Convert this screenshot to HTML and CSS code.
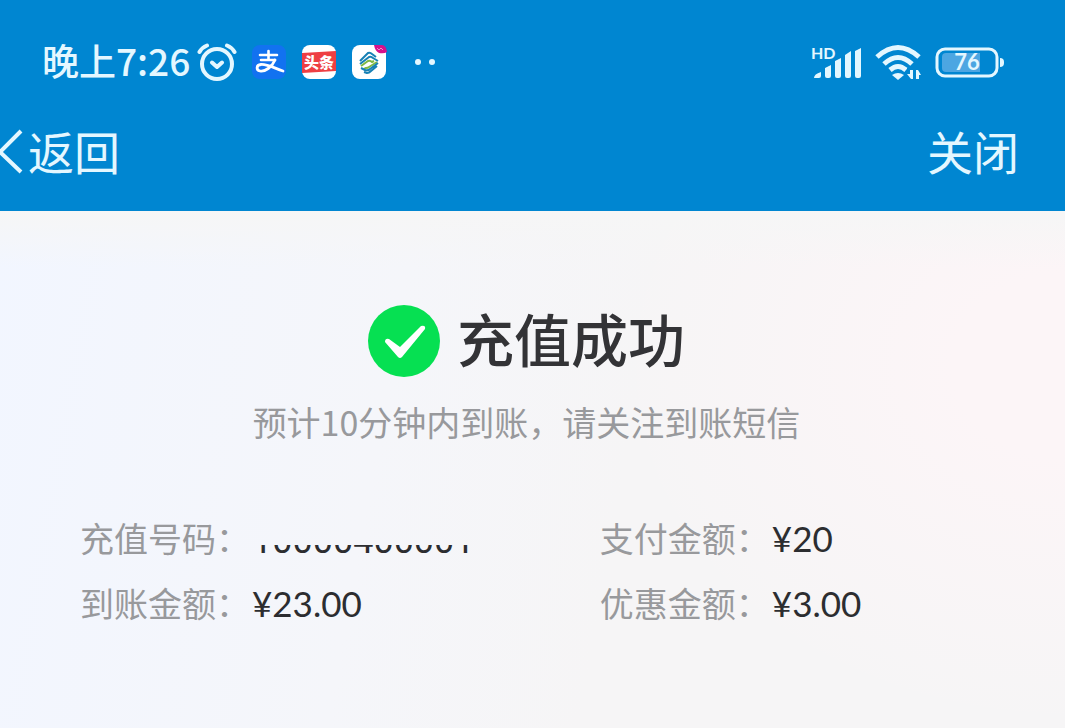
FILE: index.html
```html
<!DOCTYPE html>
<html lang="zh-CN">
<head>
<meta charset="utf-8">
<meta name="viewport" content="width=device-width, initial-scale=1">
<title>充值成功</title>
<link rel="stylesheet" href="styles.css">
</head>
<body>
<header class="header">
  <div class="status">
    <time class="clock">晚上7:26</time>
    <svg class="alarm" width="40" height="40" viewBox="0 0 40 40" fill="none" stroke="currentColor" stroke-width="4" stroke-linecap="round" stroke-linejoin="round" aria-hidden="true">
      <circle cx="20" cy="22" r="15"/>
      <path d="M2.500 10 Q5 5.500 10 3.500M37.500 10 Q35 5.500 30 3.500M15 20.500l5 4.500 5-4.500"/>
    </svg>
    <div class="apps">
      <svg width="34" height="34" viewBox="0 0 34 34" aria-hidden="true">
        <rect width="34" height="34" rx="8" fill="#1272f0"/>
        <g fill="none" stroke="#fff" stroke-linecap="round" stroke-linejoin="round">
          <path d="M8 10h17M16.500 6v9M9 15h14" stroke-width="2.600"/>
          <path d="M23 15C20 22 13 27 8 26c-4-1-4-6 1-6.500C15 19 22 23 31 26" stroke-width="2.800"/>
        </g>
      </svg>
      <svg width="34" height="34" viewBox="0 0 34 34" aria-hidden="true">
        <rect width="34" height="34" rx="8" fill="#fff"/>
        <path d="M0 8l34-2v20L0 28z" fill="#ee3f43"/>
        <text class="toutiao" x="17" y="23" text-anchor="middle">头条</text>
      </svg>
      <svg width="35" height="36" viewBox="0 0 35 36" aria-hidden="true">
        <rect y="1" width="34" height="34" rx="8" fill="#fff"/>
        <path d="M22 1h8q4 0 5 7-3 2-8 1-4-2-5-8z" fill="#d6118b"/>
        <path d="M25 4l2 2 2-2 2 2" fill="none" stroke="#f08bc8" stroke-width="1"/>
        <g fill="none" stroke-width="2" stroke-linejoin="round">
          <path d="M8 17l8-8q2-1 4 1l4 3M8 20l9-7q2-1 4 1l5 3" stroke="#1781b5"/>
          <path d="M9 22l7-5q2-1 4 1l2-1M12 25l2-1q2 0 3-1l8-5" stroke="#7fb842"/>
          <path d="M9 24l4 2q3 1 5-1l8-6M12 28l3 1q2 0 4-2l6-5" stroke="#1781b5"/>
        </g>
      </svg>
    </div>
    <svg class="more" width="22" height="6" viewBox="0 0 22 6" fill="currentColor" aria-hidden="true"><circle cx="3" cy="3" r="3"/><circle cx="17" cy="3" r="3"/></svg>
    <div class="system">
      <svg width="52" height="40" viewBox="0 0 52 40" fill="currentColor" aria-hidden="true">
        <text class="hd" x="0" y="17">HD</text>
        <path d="M3 36q0-4 7-6v4q0 2-2 2zM14 26l6-3v11q0 2-2 2h-2q-2 0-2-2zM24 19l6-3v18q0 2-2 2h-2q-2 0-2-2zM34 13l6-4v25q0 2-2 2h-2q-2 0-2-2zM44 9l6-3v28q0 2-2 2h-2q-2 0-2-2z"/>
      </svg>
      <svg width="48" height="36" viewBox="0 0 48 36" fill="none" stroke="currentColor" stroke-width="5" aria-hidden="true">
        <path d="M2 13Q23-6 44 13M9 20Q23 7 37 20M15 26Q23 19 31 26"/>
        <path d="M17 31q6-4 12 0l-6 5z" fill="currentColor" stroke="none"/>
        <path d="M32 24h14v12H32z" fill="#0086d1" stroke="none"/>
        <path d="M38 26v9h-2l-4-5h3v-4zM41 35v-9h2l3 5h-2v4z" fill="currentColor" stroke="none"/>
      </svg>
      <svg width="70" height="32" viewBox="0 0 70 32" aria-hidden="true">
        <rect x="2" y="3" width="60" height="27" rx="8" fill="none" stroke="currentColor" stroke-width="3"/>
        <path d="M11 7h34v19H11q-4 0-4-4V11q0-4 4-4z" fill="#4ca6e2"/>
        <path d="M65 12q4 0 4 4v1q0 4-4 4z" fill="currentColor"/>
        <text class="level" x="32" y="24" text-anchor="middle">76</text>
      </svg>
    </div>
  </div>
  <nav class="nav">
    <button class="nav-button" type="button">
      <svg width="24" height="46" viewBox="0 0 24 46" fill="none" stroke="currentColor" stroke-width="4" aria-hidden="true"><path d="M21 3L0 24l21 20"/></svg>
      <span>返回</span>
    </button>
    <button class="nav-button" type="button">关闭</button>
  </nav>
</header>
<main class="result">
  <div class="summary">
    <h1 class="title">
      <svg width="72" height="72" viewBox="0 0 72 72" aria-hidden="true">
        <circle cx="36" cy="36" r="36" fill="#06e052"/>
        <path d="M17 37q0-4 4-3l11 8 21-21q5-1 4 3L34 52q-2 2-4 0z" fill="#fff"/>
      </svg>
      <span class="title-text">充值成功</span>
    </h1>
    <p class="hint">预计10分钟内到账，请关注到账短信</p>
  </div>
  <dl class="details">
    <div class="item"><dt>充值号码：</dt><dd><span class="masked">10000400001</span></dd></div>
    <div class="item"><dt>支付金额：</dt><dd>¥20</dd></div>
    <div class="item"><dt>到账金额：</dt><dd>¥23.00</dd></div>
    <div class="item"><dt>优惠金额：</dt><dd>¥3.00</dd></div>
  </dl>
</main>
</body>
</html>
```
FILE: styles.css
```css
* { box-sizing: border-box; }

body {
  margin: 0;
  min-height: 100vh;
  display: flex;
  flex-direction: column;
  font-family: "Noto Sans CJK SC", sans-serif;
  background: #f5f5f6;
}

svg { display: block; flex: none; }

.header {
  background: #0086d1;
  color: #e4f7ff;
  padding-bottom: 34px;
}

.status {
  display: flex;
  align-items: center;
  height: 124px;
  padding: 0 60px 0 42px;
}

.clock {
  padding-bottom: 4px;
  font-size: 37px;
  font-weight: 500;
  line-height: 48px;
}

.alarm { margin-left: 7px; }

.apps {
  display: flex;
  align-items: center;
  gap: 16px;
  margin-left: 15px;
}

.more { margin-left: 28px; }

.system {
  display: flex;
  align-items: center;
  gap: 12px;
  margin-left: auto;
}

.toutiao { font-size: 15px; font-weight: 900; fill: #fff; }
.hd { font: 700 16px Lato, sans-serif; }
.level { font: 700 22px Lato, sans-serif; fill: currentColor; }

.nav {
  display: flex;
  justify-content: space-between;
  padding-right: 46px;
}

.nav-button {
  display: flex;
  align-items: center;
  gap: 4px;
  padding: 0;
  border: 0;
  background: none;
  color: inherit;
  font: 400 46px/53px "Noto Sans CJK SC", sans-serif;
}

.result {
  flex: 1;
  padding-top: 88px;
  background:
    linear-gradient(#f6f6f6, rgba(246, 246, 246, 0) 56px),
    radial-gradient(ellipse 42% 70% at 100% 30%, #fcf5f7 25%, rgba(252, 245, 247, 0)),
    linear-gradient(100deg, #f2f6ff, #f5f6fa 36%, #f6f5f6 58%);
}

.summary {
  display: flex;
  flex-direction: column;
  align-items: center;
  padding-right: 12px;
}

.title {
  display: flex;
  align-items: center;
  gap: 17px;
  margin: 0;
  color: #333336;
  font-size: 57px;
  font-weight: 500;
  line-height: 76px;
}

.title-text { padding-bottom: 8px; }

.hint {
  margin: 15px 0 0;
  color: #98999c;
  font-size: 34px;
  font-weight: 400;
  line-height: 48px;
}

.details {
  display: grid;
  grid-template-columns: 19fr 17fr;
  row-gap: 17px;
  margin: 68px 0 0;
  padding-left: 80px;
  font-size: 34px;
  line-height: 48px;
}

.item { display: flex; gap: 2px; }

dt { color: #98999c; }

dd {
  margin: 0;
  color: #2c2d30;
  font-family: Lato, sans-serif;
  font-size: 35px;
}

/* Only the lower edge of the number shows above the baseline. */
.masked {
  display: block;
  padding-top: 6px;
  font-family: Roboto, sans-serif;
  font-size: 36px;
  line-height: 42px;
  clip-path: inset(31px 0 8px);
}
```
